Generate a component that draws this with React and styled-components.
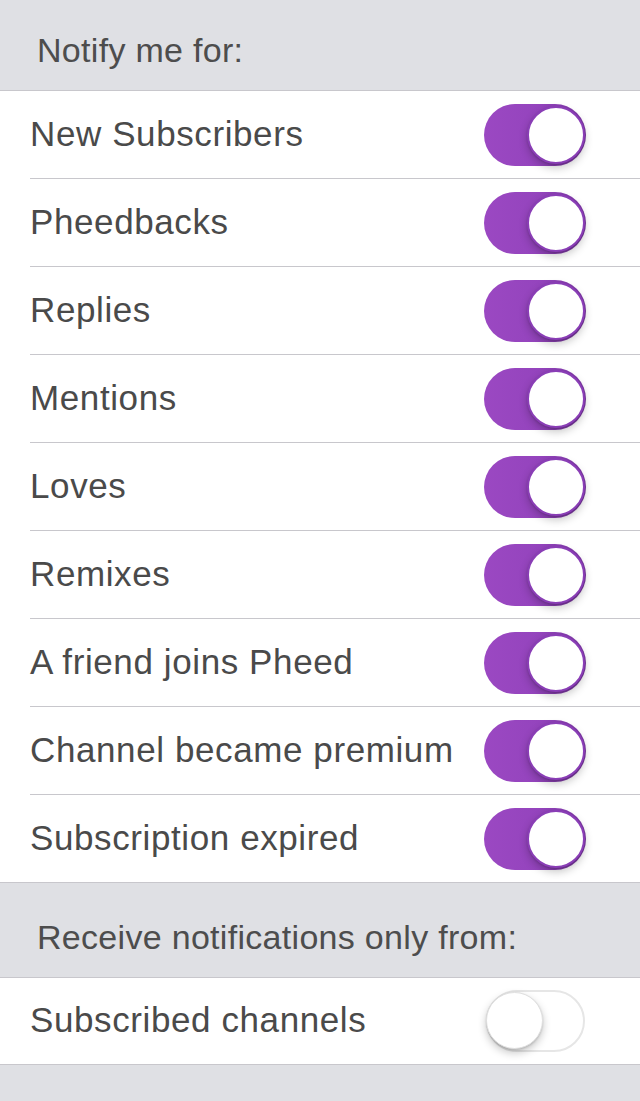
import styled, { createGlobalStyle } from "styled-components"

const GlobalStyle = createGlobalStyle`
  body {
    margin: 0;
    background: #dfe0e4;
    font-family: "Liberation Sans", Arial, sans-serif;
  }
`

const Page = styled.div`
  width: 640px;
  min-height: 1101px;
  background: #dfe0e4;
`

const SectionHeader = styled.div`
  height: ${(p) => p.height}px;
  display: flex;
  align-items: flex-end;
  padding: 0 0 20px 37px;
  box-sizing: border-box;
  border-bottom: 1px solid #c8c7cc;
  font-size: 34px;
  letter-spacing: 0.3px;
  color: #4d4d4d;
`

const List = styled.div`
  background: #fff;
  border-bottom: 1px solid #c8c7cc;
`

// last row has no separator of its own, the list border closes it
const Row = styled.div`
  height: ${(p) => (p.height || 88) - (p.last ? 1 : 0)}px;
  margin-left: 30px;
  padding-right: 54px;
  display: flex;
  align-items: center;
  justify-content: space-between;
  border-bottom: ${(p) => (p.last ? "none" : "1px solid #c8c7cc")};
  box-sizing: border-box;
`

const Label = styled.span`
  font-size: 35px;
  letter-spacing: 0.6px;
  color: #4a4a4a;
  padding-bottom: 2px;
`

const Track = styled.div`
  position: relative;
  width: ${(p) => (p.on ? 102 : 99)}px;
  height: 62px;
  border-radius: 31px;
  box-sizing: border-box;
  margin-right: ${(p) => (p.on ? 0 : 1)}px;
  background: ${(p) =>
    p.on ? "linear-gradient(90deg, #9b48c2 0%, #9444bd 55%, #7d36a6 100%)" : "#fff"};
  border: ${(p) => (p.on ? "none" : "2px solid #e6e6e6")};
`

const Knob = styled.div`
  position: absolute;
  top: ${(p) => (p.on ? 2 : 0)}px;
  left: ${(p) => (p.on ? 43 : -2)}px;
  width: ${(p) => (p.on ? 58 : 57)}px;
  height: ${(p) => (p.on ? 58 : 57)}px;
  border-radius: 50%;
  background: #fff;
  box-sizing: border-box;
  border: ${(p) => (p.on ? "2px solid #8a3eb6" : "1px solid #e0e0e0")};
  box-shadow: 0 4px 8px rgba(0, 0, 0, 0.22), 0 1px 2px rgba(0, 0, 0, 0.15);
`

const Toggle = ({ on }) => (
  <Track on={on}>
    <Knob on={on} />
  </Track>
)

const notifyItems = [
  "New Subscribers",
  "Pheedbacks",
  "Replies",
  "Mentions",
  "Loves",
  "Remixes",
  "A friend joins Pheed",
  "Channel became premium",
  "Subscription expired",
]

const App = () => {
  return (
    <Page>
      <GlobalStyle />
      <SectionHeader height={91}>Notify me for:</SectionHeader>
      <List>
        {notifyItems.map((item, i) => (
          <Row key={item} last={i === notifyItems.length - 1}>
            <Label>{item}</Label>
            <Toggle on />
          </Row>
        ))}
      </List>
      <SectionHeader height={95}>Receive notifications only from:</SectionHeader>
      <List>
        <Row last height={87}>
          <Label>Subscribed channels</Label>
          <Toggle on={false} />
        </Row>
      </List>
    </Page>
  )
}

export default App
